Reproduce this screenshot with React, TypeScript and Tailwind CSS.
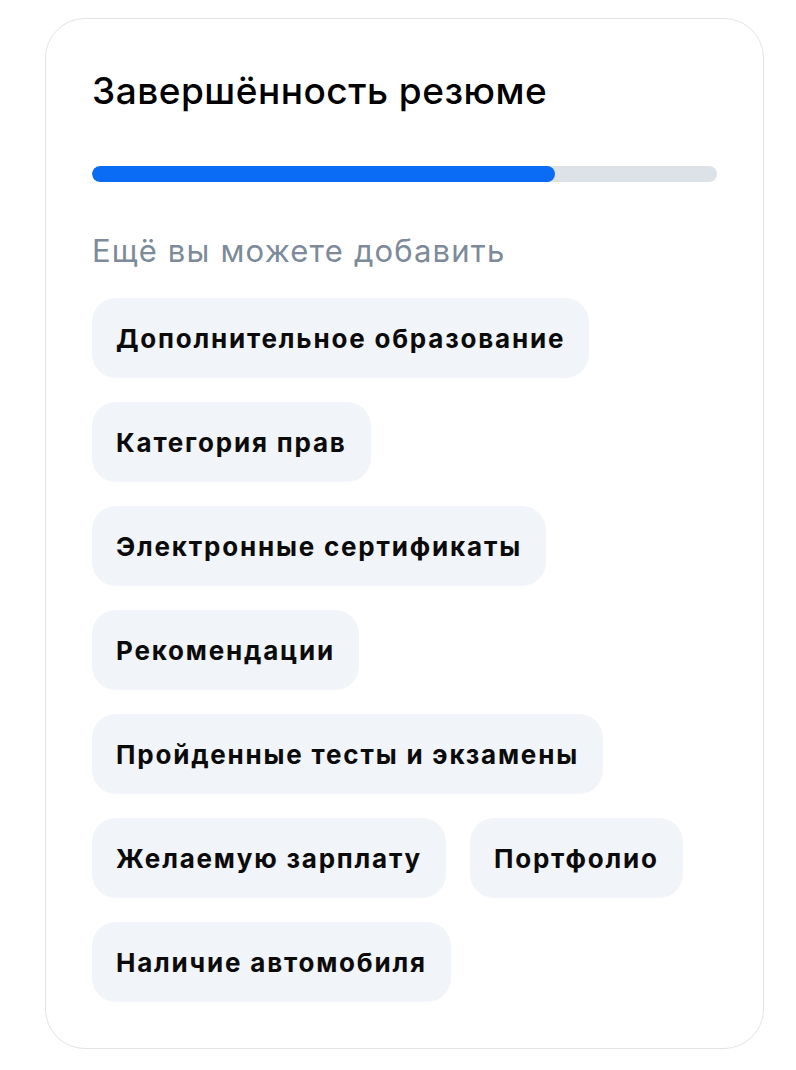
const suggestions = [
  'Дополнительное образование',
  'Категория прав',
  'Электронные сертификаты',
  'Рекомендации',
  'Пройденные тесты и экзамены',
  'Желаемую зарплату',
  'Портфолио',
  'Наличие автомобиля',
];

// these two share one row
const inline = ['Желаемую зарплату', 'Портфолио'];

function Chip({ label }: { label: string }) {
  return (
    <button className="h-[80px] px-6 rounded-3xl bg-[#f1f4f8] text-[26px] font-bold text-[#0b0b0b] tracking-[1.8px]">
      {label}
    </button>
  );
}

export default function App() {
  const progress = 74;

  return (
    <div className="min-h-screen bg-white pt-[18px] pl-[45px]" style={{ fontFamily: 'Inter, "Noto Sans", sans-serif' }}>
      <div className="w-[719px] rounded-[40px] border border-[#e1e3e6] px-[46px] py-[46px]">
        <h2 className="text-[37px] leading-[52px] font-medium text-black tracking-[0.5px]">Завершённость резюме</h2>

        {/* progress */}
        <div className="mt-[49px] h-4 w-full rounded-full bg-[#dde2e8] overflow-hidden">
          <div className="h-full rounded-full bg-[#0a6cf5]" style={{ width: `${progress}%` }} />
        </div>

        <p className="mt-[49px] text-[31px] leading-[40px] text-[#7c8a99] tracking-[1.2px]">Ещё вы можете добавить</p>

        <div className="mt-[27px] flex flex-wrap gap-6">
          {suggestions.map((s) => (
            <div key={s} className={inline.includes(s) ? '' : 'basis-full'}>
              <Chip label={s} />
            </div>
          ))}
        </div>
      </div>
    </div>
  );
}
